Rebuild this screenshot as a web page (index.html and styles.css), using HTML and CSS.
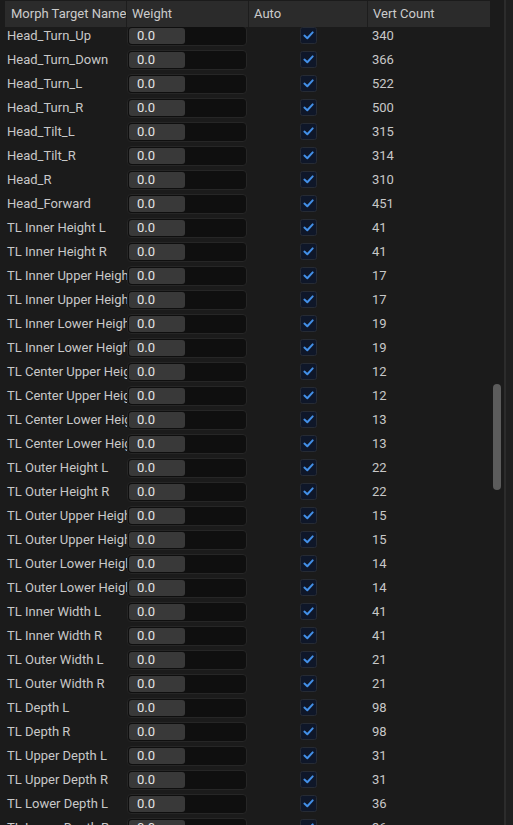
FILE: index.html
```
<!DOCTYPE html>
<html lang="en">
<head>
  <meta charset="UTF-8" />
  <title>Morph Target Preview</title>
  <link rel="stylesheet" href="styles.css">
</head>
<body>

  <div class="panel">
    <div class="table">
      <!-- Column headers -->
      <div class="header">
        <div class="hcell col-name">Morph Target Name</div>
        <div class="hcell col-weight">Weight</div>
        <div class="hcell col-auto">Auto</div>
        <div class="hcell col-count">Vert Count</div>
      </div>

      <!-- Rows (list is scrolled, so first row is partly under the header) -->
      <div class="rows">
        <div class="rows-inner" id="rows"></div>
      </div>
    </div>

    <div class="scrollbar">
      <div class="thumb"></div>
    </div>
    <div class="edge"></div>
  </div>

  <template id="row-tpl">
    <div class="row">
      <div class="cell col-name"></div>
      <div class="cell col-weight">
        <div class="field"><div class="fill">0.0</div></div>
      </div>
      <div class="cell col-auto">
        <svg class="check" width="17" height="17" viewBox="0 0 17 17">
          <rect x="0.5" y="0.5" width="16" height="16" rx="2" fill="#0f1729" stroke="#262b34"/>
          <path d="M4.4 8.6 L7.3 11.2 L12.7 5.4" fill="none" stroke="#4390e8" stroke-width="2" stroke-linecap="round" stroke-linejoin="round"/>
        </svg>
      </div>
      <div class="cell col-count"></div>
    </div>
  </template>

  <script>
    const targets = [
      ["Head_Turn_Up", 340], ["Head_Turn_Down", 366], ["Head_Turn_L", 522], ["Head_Turn_R", 500],
      ["Head_Tilt_L", 315], ["Head_Tilt_R", 314], ["Head_R", 310], ["Head_Forward", 451],
      ["TL Inner Height L", 41], ["TL Inner Height R", 41],
      ["TL Inner Upper Height L", 17], ["TL Inner Upper Height R", 17],
      ["TL Inner Lower Height L", 19], ["TL Inner Lower Height R", 19],
      ["TL Center Upper Height L", 12], ["TL Center Upper Height R", 12],
      ["TL Center Lower Height L", 13], ["TL Center Lower Height R", 13],
      ["TL Outer Height L", 22], ["TL Outer Height R", 22],
      ["TL Outer Upper Height L", 15], ["TL Outer Upper Height R", 15],
      ["TL Outer Lower Height L", 14], ["TL Outer Lower Height R", 14],
      ["TL Inner Width L", 41], ["TL Inner Width R", 41],
      ["TL Outer Width L", 21], ["TL Outer Width R", 21],
      ["TL Depth L", 98], ["TL Depth R", 98],
      ["TL Upper Depth L", 31], ["TL Upper Depth R", 31],
      ["TL Lower Depth L", 36], ["TL Lower Depth R", 36]
    ];

    const list = document.getElementById("rows");
    const tpl = document.getElementById("row-tpl");

    for (const [name, count] of targets) {
      const row = tpl.content.firstElementChild.cloneNode(true);
      row.querySelector(".col-name").textContent = name;
      row.querySelector(".col-count").textContent = count;
      list.appendChild(row);
    }
  </script>

</body>
</html>
```

FILE: styles.css
```
html, body {
  margin: 0;
  padding: 0;
  background: #1b1b1b;
  color: #c6c6c6;
  font-family: Roboto, "Liberation Sans", sans-serif;
  font-size: 13px;
  overflow: hidden;
}

.panel {
  display: flex;
  height: 825px;
  padding-left: 5px;
  box-sizing: border-box;
}

.table {
  width: 485px;
  display: flex;
  flex-direction: column;
}

/* header */

.header {
  display: flex;
  height: 26px;
  margin-top: 1px;
  background: #2b2b2b;
  position: relative;
  z-index: 1;
}

.hcell {
  box-sizing: border-box;
  padding-left: 5px;
  line-height: 26px;
  white-space: nowrap;
  overflow: hidden;
  color: #cbcbcb;
  border-right: 1px solid #1d1d1d;
}

.hcell.col-name {
  padding-left: 6px;
}

.hcell.col-count {
  border-right: none;
}

.col-name { width: 122px; }
.col-weight { width: 122px; }
.col-auto { width: 119px; }
.col-count { width: 122px; }

/* rows */

.rows {
  flex: 1;
  overflow: hidden;
}

.rows-inner {
  margin-top: -4px;
}

.row {
  display: flex;
  height: 24px;
  align-items: center;
}

.cell {
  box-sizing: border-box;
  white-space: nowrap;
  overflow: hidden;
}

.cell.col-name {
  padding-left: 2px;
  color: #c8c8c8;
}

.cell.col-weight {
  padding-top: 2px;
}

.field {
  width: 120px;
  height: 20px;
  box-sizing: border-box;
  border: 1px solid #262626;
  border-radius: 4px;
  background: #0f0f0f;
  padding: 1px;
}

.fill {
  width: 56px;
  height: 100%;
  box-sizing: border-box;
  border-radius: 3px;
  background: #393939;
  color: #e4e4e4;
  padding-left: 8px;
  line-height: 16px;
}

.cell.col-auto {
  display: flex;
  justify-content: center;
}

.check {
  display: block;
}

.cell.col-count {
  padding-left: 4px;
  color: #c8c8c8;
}

/* scrollbar */

.scrollbar {
  width: 14px;
  padding-left: 3px;
  box-sizing: border-box;
}

.thumb {
  width: 8px;
  height: 106px;
  margin-top: 384px;
  border-radius: 4px;
  background: #5c5c5c;
}

.edge {
  width: 9px;
  border-left: 2px solid #2c2c2c;
  background: #1f1f1f;
  box-sizing: border-box;
}
```
